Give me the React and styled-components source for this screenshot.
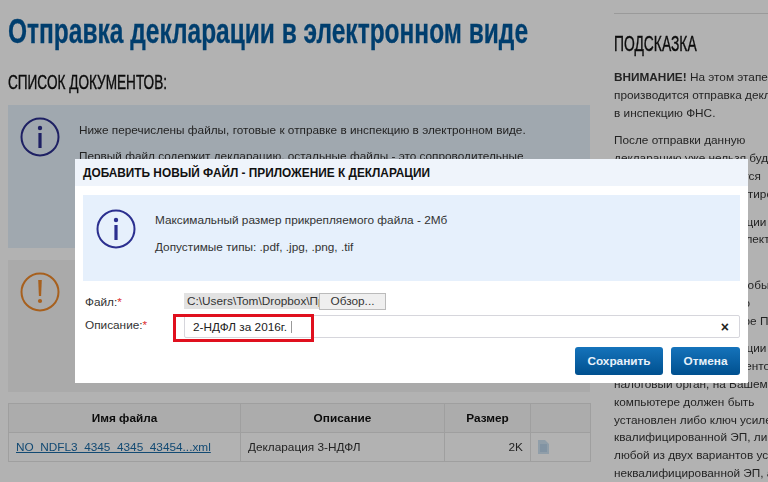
import React from 'react'
import styled, { createGlobalStyle } from 'styled-components'

const GlobalStyle = createGlobalStyle`
  html, body {
    margin: 0;
    padding: 0;
    height: 100%;
    overflow: hidden;
    background: #fff;
  }
  body {
    font-family: "Liberation Sans", Arial, sans-serif;
    color: #222;
  }
`

const Page = styled.div`
  position: relative;
  width: 768px;
  height: 482px;
  overflow: hidden;
  display: grid;
  grid-template-columns: 582px 1fr;
  column-gap: 24px;
  padding-left: 8px;
  box-sizing: border-box;
  filter: blur(0.35px);
`

const Main = styled.div`
  display: flex;
  flex-direction: column;
`

const Title = styled.h1`
  margin: 9px 0 0;
  font-size: 35px;
  line-height: 44px;
  font-weight: 700;
  -webkit-text-stroke: 0.3px #005a9e;
  color: #005a9e;
  white-space: nowrap;
  transform: scaleX(0.7);
  transform-origin: left center;
`

const Subtitle = styled.h2`
  margin: 17px 0 0;
  font-size: 20px;
  line-height: 24px;
  font-weight: 400;
  -webkit-text-stroke: 0.4px #111;
  color: #111;
  white-space: nowrap;
  transform: scaleX(0.68);
  transform-origin: left center;
`

const Notice = styled.div`
  margin-top: ${props => props.$top}px;
  height: ${props => props.$height}px;
  background: ${props => props.$bg};
  display: flex;
  gap: 19px;
  padding: 12px;
  box-sizing: border-box;
  font-size: 11.8px;
  line-height: 18px;
  color: #333;
  p {
    margin: 0 0 8px;
    padding-top: 0;
  }
  div {
    padding-top: 4px;
  }
`

const FileTable = styled.table`
  margin-top: 11px;
  width: 582px;
  border-collapse: collapse;
  table-layout: fixed;
  font-size: 11.8px;
  color: #333;
  th, td {
    border: 1px solid #e4e4e4;
    height: 29px;
    padding: 0 7px;
    box-sizing: border-box;
  }
  th {
    font-weight: 700;
    color: #111;
    background: #f6f6f6;
  }
  a {
    color: #1b6aa5;
    text-decoration: underline;
  }
`

const SizeCell = styled.td`
  text-align: right;
`

const Side = styled.aside`
  overflow: hidden;
`

const SideRule = styled.div`
  margin-top: 13px;
  height: 1px;
  background: #ddd;
`

const SideTitle = styled.h2`
  margin: 18px 0 13px;
  font-size: 22px;
  line-height: 24px;
  font-weight: 400;
  -webkit-text-stroke: 0.4px #111;
  color: #111;
  white-space: nowrap;
  transform: scaleX(0.63);
  transform-origin: left center;
`

const SideText = styled.p`
  margin: 0 0 10px;
  font-size: 11.8px;
  line-height: 17.8px;
  color: #333;
  white-space: nowrap;
`

const Overlay = styled.div`
  position: absolute;
  inset: 0;
  background: rgba(0, 0, 0, 0.3);
`

const Modal = styled.div`
  position: absolute;
  left: 75px;
  top: 159px;
  width: 673px;
  height: 224px;
  background: #fff;
  display: flex;
  flex-direction: column;
`

const ModalHeader = styled.div`
  height: 27px;
  background: #eff4fb;
  padding: 1px 0 0 8px;
  box-sizing: border-box;
  font-size: 11.85px;
  font-weight: 700;
  line-height: 27px;
  color: #111;
`

const ModalNotice = styled.div`
  margin: 9px 8px 0;
  height: 86px;
  background: #e6f0fc;
  display: flex;
  align-items: flex-start;
  gap: 19px;
  padding: 14px 13px;
  box-sizing: border-box;
  font-size: 11.8px;
  color: #333;
  p {
    margin: 4px 0 13px;
    line-height: 14px;
  }
`

const Form = styled.div`
  margin: 12px 8px 0 10px;
  display: grid;
  grid-template-columns: 99px 1fr;
  row-gap: 6px;
  align-items: center;
  font-size: 11.8px;
  color: #333;
`

const Label = styled.label`
  padding-top: ${props => props.$pushDown || 0}px;
  padding-bottom: ${props => props.$pushUp || 0}px;
  b {
    color: #d33;
    font-weight: 400;
  }
`

const FileField = styled.div`
  display: flex;
  align-items: center;
  height: 16px;
`

const FilePath = styled.span`
  width: 135px;
  height: 16px;
  padding-left: 3px;
  box-sizing: border-box;
  background: #e2e2e2;
  line-height: 16px;
  overflow: hidden;
  white-space: nowrap;
`

const BrowseButton = styled.span`
  width: 67px;
  height: 17px;
  line-height: 15px;
  text-align: center;
  background: #efefef;
  border: 1px solid #bbb;
  box-sizing: border-box;
`

const TextField = styled.div`
  height: 23px;
  border: 1px solid #d6d6dc;
  border-radius: 2px;
  box-sizing: border-box;
  padding: 0 10px 0 8px;
  display: flex;
  align-items: center;
  justify-content: space-between;
  color: #222;
`

const Caret = styled.i`
  display: inline-block;
  width: 1px;
  height: 12px;
  margin-left: 4px;
  background: #999;
  vertical-align: -2px;
`

const Clear = styled.span`
  font-size: 14px;
  font-weight: 700;
  color: #222;
`

const Actions = styled.div`
  margin: 9px 8px 0 0;
  display: flex;
  justify-content: flex-end;
  gap: 8px;
`

const Action = styled.div`
  width: ${props => props.$width}px;
  height: 28px;
  border-radius: 3px;
  background: linear-gradient(#1573bb, #00508f);
  color: #e8f2fa;
  font-size: 11.8px;
  font-weight: 700;
  line-height: 28px;
  text-align: center;
`

const Highlight = styled.div`
  position: absolute;
  left: 173px;
  top: 314px;
  width: 141px;
  height: 28px;
  border: 3px solid #e0101e;
  box-sizing: border-box;
`

const InfoIcon = ({ size = 40 }) => (
  <svg width={size} height={size} viewBox="0 0 40 40" fill="none" style={{ flex: 'none' }}>
    <circle cx="20" cy="20" r="18.5" stroke="#2b2f8f" strokeWidth="2" />
    <circle cx="20" cy="11" r="2.2" fill="#2b2f8f" />
    <rect x="18.4" y="16" width="3.2" height="15" fill="#2b2f8f" />
  </svg>
)

const WarnIcon = () => (
  <svg width="40" height="40" viewBox="0 0 40 40" fill="none" style={{ flex: 'none' }}>
    <circle cx="20" cy="20" r="18.5" stroke="#ef8a2c" strokeWidth="2" />
    <path d="M18.2 8h3.6l-.7 16h-2.2z" fill="#ef8a2c" />
    <circle cx="20" cy="29" r="2.1" fill="#ef8a2c" />
  </svg>
)

const DocIcon = () => (
  <svg width="11" height="14" viewBox="0 0 11 14" style={{ display: 'block' }}>
    <path d="M0 0h7l4 4v10H0z" fill="#cfe2f3" />
    <path d="M2 5h7M2 7h7M2 9h7M2 11h7" stroke="#9dbfdc" strokeWidth="0.8" />
  </svg>
)

export default function App() {
  return (
    <>
      <GlobalStyle />
      <Page>
        <Main>
          <Title>Отправка декларации в электронном виде</Title>
          <Subtitle>СПИСОК ДОКУМЕНТОВ:</Subtitle>
          <Notice $top={11} $height={143} $bg="#e6f1fb">
            <InfoIcon />
            <div>
              <p>Ниже перечислены файлы, готовые к отправке в инспекцию в электронном виде.</p>
              <p>Первый файл содержит декларацию, остальные файлы - это сопроводительные</p>
            </div>
          </Notice>
          <Notice $top={12} $height={132} $bg="#f4f4f4">
            <WarnIcon />
          </Notice>
          <FileTable>
            <colgroup>
              <col style={{ width: 232 }} />
              <col style={{ width: 204 }} />
              <col style={{ width: 86 }} />
              <col style={{ width: 60 }} />
            </colgroup>
            <thead>
              <tr>
                <th>Имя файла</th>
                <th>Описание</th>
                <th>Размер</th>
                <th />
              </tr>
            </thead>
            <tbody>
              <tr>
                <td><a href="#file">NO_NDFL3_4345_4345_43454...xml</a></td>
                <td>Декларация 3-НДФЛ</td>
                <SizeCell>2K</SizeCell>
                <td><DocIcon /></td>
              </tr>
            </tbody>
          </FileTable>
        </Main>
        <Side>
          <SideRule />
          <SideTitle>ПОДСКАЗКА</SideTitle>
          <SideText><strong>ВНИМАНИЕ!</strong> На этом этапе<br />производится отправка декларации<br />в инспекцию ФНС.</SideText>
          <SideText>После отправки данную<br />декларацию уже нельзя будет<br />забрать: она отправляется<br />сразу её нельзя отредактировать</SideText>
          <SideText>Для сдачи этой декларации<br />в ту инспекцию ФНС в электронном<br />виде</SideText>
          <SideText>Необходимо следить, чтобы<br />все числа указаны точно<br />и введены на компьютере Пользователя</SideText>
          <SideText>Для сдачи этой декларации<br />вместе с пакетом документов в<br />налоговый орган, на Вашем<br />компьютере должен быть<br />установлен либо ключ усиленной<br />квалифицированной ЭП, либо<br />любой из двух вариантов усиленной<br />неквалифицированной ЭП, а также</SideText>
        </Side>
        <Overlay />
        <Modal>
          <ModalHeader>ДОБАВИТЬ НОВЫЙ ФАЙЛ - ПРИЛОЖЕНИЕ К ДЕКЛАРАЦИИ</ModalHeader>
          <ModalNotice>
            <InfoIcon />
            <div>
              <p>Максимальный размер прикрепляемого файла - 2Мб</p>
              <p>Допустимые типы: .pdf, .jpg, .png, .tif</p>
            </div>
          </ModalNotice>
          <Form>
            <Label $pushDown={2}>Файл:<b>*</b></Label>
            <FileField>
              <FilePath>C:\Users\Tom\Dropbox\Пр</FilePath>
              <BrowseButton>Обзор...</BrowseButton>
            </FileField>
            <Label $pushUp={4}>Описание:<b>*</b></Label>
            <TextField>
              <span>2-НДФЛ за 2016г.<Caret /></span>
              <Clear>×</Clear>
            </TextField>
          </Form>
          <Actions>
            <Action $width={88}>Сохранить</Action>
            <Action $width={69}>Отмена</Action>
          </Actions>
        </Modal>
        <Highlight />
      </Page>
    </>
  )
}
